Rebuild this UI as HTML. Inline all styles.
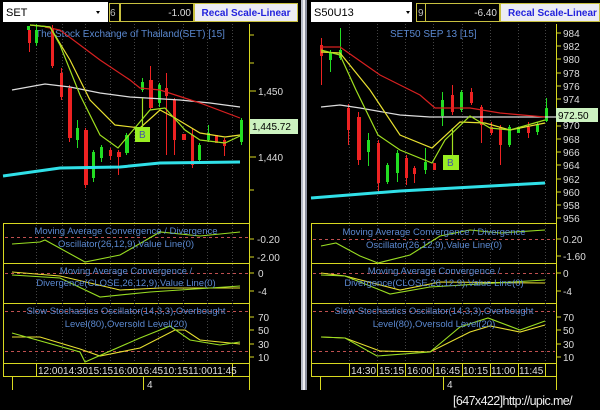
<!DOCTYPE html>
<html><head><meta charset="utf-8"><style>
html,body{margin:0;padding:0;background:#000;width:600px;height:410px;overflow:hidden}
svg{display:block}
text{font-family:"Liberation Sans",Arial,sans-serif}
</style></head><body>
<svg width="600" height="410" viewBox="0 0 600 410" xmlns="http://www.w3.org/2000/svg">
<rect width="600" height="410" fill="#000"/>
<rect x="301" y="0" width="2" height="390" fill="#b8bcc8"/>
<rect x="303" y="0" width="2" height="390" fill="#f0f0f4"/>
<rect x="305" y="0" width="2" height="390" fill="#8c90a0"/>

<rect x="3" y="2" width="105" height="20" fill="#fff"/>
<text x="6" y="16" font-size="11" fill="#000">SET</text>
<path d="M96 11 l4 0 l-2 3z" fill="#000"/>
<rect x="109.5" y="3.5" width="10" height="18" fill="#000" stroke="#c8c040"/>
<text x="110" y="16" font-size="10" fill="#bbb">6</text>
<rect x="120.5" y="3.5" width="73" height="18" fill="#000" stroke="#c8c040"/>
<text x="191" y="16" font-size="10" fill="#ddd" text-anchor="end">-1.00</text>
<rect x="194.5" y="3.5" width="103" height="18" fill="#ececf4" stroke="#c8c040"/>
<text x="246" y="16" font-size="10" font-weight="bold" fill="#2222dd" text-anchor="middle">Recal Scale-Linear</text>

<rect x="311" y="2" width="101" height="20" fill="#fff"/>
<text x="314" y="16" font-size="11" fill="#000">S50U13</text>
<path d="M406 11 l4 0 l-2 3z" fill="#000"/>
<rect x="416.5" y="3.5" width="9" height="18" fill="#000" stroke="#c8c040"/>
<text x="418" y="16" font-size="10" fill="#bbb">9</text>
<rect x="425.5" y="3.5" width="74" height="18" fill="#000" stroke="#c8c040"/>
<text x="497" y="16" font-size="10" fill="#ddd" text-anchor="end">-6.40</text>
<rect x="500.5" y="3.5" width="99" height="18" fill="#ececf4" stroke="#c8c040"/>
<text x="508" y="16" font-size="10" font-weight="bold" fill="#2222dd">Recal Scale-Linear</text>

<g stroke="#d8d820" stroke-width="1" fill="none">
<line x1="249.5" y1="24" x2="249.5" y2="390"/>
<line x1="3.5" y1="223" x2="3.5" y2="376"/>
<line x1="3" y1="223.5" x2="250" y2="223.5"/>
<line x1="3" y1="263.5" x2="250" y2="263.5"/>
<line x1="3" y1="303.5" x2="250" y2="303.5"/>
<line x1="3" y1="363.5" x2="250" y2="363.5"/>
<line x1="3" y1="376.5" x2="250" y2="376.5"/>
<line x1="12.5" y1="376" x2="12.5" y2="390"/>
<line x1="143.5" y1="376" x2="143.5" y2="390"/>
<line x1="36.5" y1="364" x2="36.5" y2="376"/>
<line x1="232.5" y1="364" x2="232.5" y2="376"/>
</g>
<g stroke="#444" stroke-dasharray="1,2">
<line x1="36.5" y1="24" x2="36.5" y2="363"/><line x1="62.5" y1="24" x2="62.5" y2="363"/><line x1="85.5" y1="24" x2="85.5" y2="363"/><line x1="110.5" y1="24" x2="110.5" y2="363"/><line x1="134.5" y1="24" x2="134.5" y2="363"/><line x1="158.5" y1="24" x2="158.5" y2="363"/><line x1="183.5" y1="24" x2="183.5" y2="363"/><line x1="207.5" y1="24" x2="207.5" y2="363"/><line x1="232.5" y1="24" x2="232.5" y2="363"/>
</g>
<g stroke="#d8d820">
<line x1="250" y1="35" x2="254" y2="35"/><line x1="250" y1="63" x2="254" y2="63"/><line x1="250" y1="91" x2="256" y2="91"/><line x1="250" y1="124" x2="254" y2="124"/><line x1="250" y1="157" x2="256" y2="157"/><line x1="250" y1="190" x2="254" y2="190"/>
<line x1="250" y1="239" x2="254" y2="239"/><line x1="250" y1="257" x2="254" y2="257"/><line x1="250" y1="273" x2="254" y2="273"/><line x1="250" y1="291" x2="254" y2="291"/><line x1="250" y1="317" x2="254" y2="317"/><line x1="250" y1="330" x2="254" y2="330"/><line x1="250" y1="344" x2="254" y2="344"/><line x1="250" y1="357" x2="254" y2="357"/>
</g>
<g font-size="10" fill="#ddd">
<text x="258" y="95">1,450</text><text x="258" y="161">1,440</text>
<text x="257" y="243">-0.20</text><text x="257" y="261">-2.00</text>
<text x="258" y="277">0</text><text x="258" y="295">-4</text>
<text x="258" y="321">70</text><text x="258" y="334">50</text><text x="258" y="348">30</text><text x="258" y="361">10</text>
<text x="38" y="374" font-size="10">12:0014:3015:1516:0016:4510:1511:0011:45</text>
<text x="147" y="388">4</text>
</g>
<rect x="250" y="119" width="48" height="15" fill="#ccf2c0"/>
<text x="252" y="130" font-size="10" fill="#000">1,445.72</text>
<text x="35" y="37" font-size="10" fill="#5a88d0">The Stock Exchange of Thailand(SET) [15]</text>

<g>
<rect x="27" y="26" width="3" height="4" fill="#22dd22"/>
<line x1="29.5" y1="30" x2="29.5" y2="52" stroke="#e22"/><rect x="28" y="30" width="3" height="13" fill="#e22"/>
<line x1="36.5" y1="24" x2="36.5" y2="46" stroke="#2d2"/><rect x="35" y="30" width="3" height="13" fill="#2d2"/>
<line x1="52.5" y1="25" x2="52.5" y2="68" stroke="#e22"/><rect x="51" y="28" width="3" height="38" fill="#e22"/>
<line x1="61.5" y1="68" x2="61.5" y2="100" stroke="#e22"/><rect x="60" y="73" width="3" height="24" fill="#e22"/>
<line x1="69.5" y1="85" x2="69.5" y2="142" stroke="#e22"/><rect x="68" y="88" width="4" height="50" fill="#e22"/>
<line x1="77.5" y1="120" x2="77.5" y2="148" stroke="#2d2"/><rect x="76" y="128" width="3" height="12" fill="#2d2"/>
<line x1="85.5" y1="128" x2="85.5" y2="188" stroke="#e22"/><rect x="84" y="130" width="4" height="55" fill="#e22"/>
<line x1="93.5" y1="150" x2="93.5" y2="182" stroke="#2d2"/><rect x="92" y="152" width="3" height="26" fill="#2d2"/>
<line x1="101.5" y1="145" x2="101.5" y2="162" stroke="#2d2"/><rect x="100" y="147" width="3" height="11" fill="#2d2"/>
<line x1="110.5" y1="148" x2="110.5" y2="160" stroke="#e22"/><rect x="109" y="150" width="3" height="6" fill="#e22"/>
<line x1="118.5" y1="150" x2="118.5" y2="175" stroke="#e22"/><rect x="117" y="152" width="4" height="5" fill="#e22"/>
<line x1="126.5" y1="133" x2="126.5" y2="155" stroke="#2d2"/><rect x="125" y="135" width="4" height="18" fill="#2d2"/>
<line x1="142.5" y1="78" x2="142.5" y2="92" stroke="#2d2"/><rect x="141" y="82" width="3" height="8" fill="#2d2"/>
<line x1="150.5" y1="66" x2="150.5" y2="110" stroke="#e22"/><rect x="149" y="80" width="4" height="28" fill="#e22"/>
<line x1="159.5" y1="83" x2="159.5" y2="107" stroke="#2d2"/><rect x="158" y="85" width="3" height="18" fill="#2d2"/>
<line x1="166.5" y1="73" x2="166.5" y2="155" stroke="#e22"/><rect x="165" y="88" width="3" height="8" fill="#e22"/>
<line x1="174.5" y1="98" x2="174.5" y2="155" stroke="#e22"/><rect x="173" y="100" width="3" height="40" fill="#e22"/>
<rect x="182" y="134" width="4" height="6" fill="#e22"/>
<line x1="192.5" y1="128" x2="192.5" y2="168" stroke="#e22"/><rect x="191" y="135" width="3" height="30" fill="#e22"/>
<line x1="199.5" y1="143" x2="199.5" y2="162" stroke="#2d2"/><rect x="198" y="145" width="3" height="15" fill="#2d2"/>
<line x1="208.5" y1="125" x2="208.5" y2="142" stroke="#2d2"/><rect x="207" y="133" width="3" height="7" fill="#2d2"/>
<rect x="215" y="135" width="3" height="8" fill="#e22"/>
<line x1="224.5" y1="138" x2="224.5" y2="156" stroke="#e22"/><rect x="223" y="140" width="3" height="6" fill="#e22"/>
<line x1="241.5" y1="118" x2="241.5" y2="145" stroke="#2d2"/><rect x="240" y="120" width="3" height="22" fill="#2d2"/>
</g>
<g fill="none" stroke-width="1.2">
<polyline stroke="#ddd" points="12,90 45,84 70,87 100,93 130,97 180,100 210,103 240,107"/>
<polyline stroke="#d82020" points="45,27 60,30 80,45 100,60 130,80 140,88 160,90 200,103 240,118"/>
<polyline stroke="#e8e030" points="30,25 50,27 70,60 90,100 115,125 140,128 160,110 175,118 200,133 225,137 240,135"/>
<polyline stroke="#a0e020" points="30,25 50,27 60,45 80,95 100,135 118,148 150,110 165,108 185,130 200,140 225,143 240,136"/>
<polyline stroke="#30e0e8" stroke-width="3" points="3,176 60,168 120,167 160,163 240,162"/>
<line x1="142.5" y1="98" x2="142.5" y2="128" stroke="#a0e020"/>
</g>
<rect x="135" y="127" width="15" height="15" fill="#99ee22"/>
<text x="139" y="138" font-size="10" fill="#4455aa">B</text>

<g stroke="#c05050" stroke-dasharray="3,3"><line x1="5" y1="237.5" x2="248" y2="237.5"/><line x1="5" y1="273.5" x2="248" y2="273.5"/><line x1="5" y1="311.5" x2="248" y2="311.5"/><line x1="5" y1="351.5" x2="248" y2="351.5"/></g>
<g fill="none" stroke-width="1.1">
<polyline stroke="#99dd22" points="12,244 40,242 45,240 85,262 120,255 160,232 200,236 240,232"/>
<polyline stroke="#e8e030" points="12,272 60,276 120,290 160,288 240,288"/>
<polyline stroke="#99dd22" points="12,275 60,278 100,297 150,292 240,286"/>
<polyline stroke="#e8e030" points="12,337 40,337 80,349 100,356 140,348 175,330 185,330 200,340 240,344"/>
<polyline stroke="#99dd22" points="12,333 80,352 85,362 140,338 170,326 190,340 220,345 240,342"/>
</g>
<g font-size="9.5" fill="#5a88d0" text-anchor="middle">
<text x="126" y="234">Moving Average Convergence / Divergence</text>
<text x="126" y="247">Oscillator(26,12,9),Value Line(0)</text>
<text x="126" y="274">Moving Average Convergence /</text>
<text x="126" y="286">Divergence(CLOSE,26,12,9),Value Line(0)</text>
<text x="126" y="314">Slow Stochastics Oscillator(14,3,3),Overbought</text>
<text x="126" y="327">Level(80),Oversold Level(20)</text>
</g>

<g stroke="#d8d820" stroke-width="1" fill="none">
<line x1="556.5" y1="24" x2="556.5" y2="390"/>
<line x1="311.5" y1="223" x2="311.5" y2="376"/>
<line x1="311" y1="223.5" x2="557" y2="223.5"/>
<line x1="311" y1="263.5" x2="557" y2="263.5"/>
<line x1="311" y1="303.5" x2="557" y2="303.5"/>
<line x1="311" y1="363.5" x2="557" y2="363.5"/>
<line x1="311" y1="376.5" x2="557" y2="376.5"/>
<line x1="320.5" y1="376" x2="320.5" y2="390"/>
<line x1="443.5" y1="376" x2="443.5" y2="390"/>
<line x1="349.5" y1="364" x2="349.5" y2="376"/><line x1="377.5" y1="364" x2="377.5" y2="376"/><line x1="405.5" y1="364" x2="405.5" y2="376"/><line x1="433.5" y1="364" x2="433.5" y2="376"/><line x1="462.5" y1="364" x2="462.5" y2="376"/><line x1="490.5" y1="364" x2="490.5" y2="376"/><line x1="518.5" y1="364" x2="518.5" y2="376"/><line x1="545.5" y1="364" x2="545.5" y2="376"/>
</g>
<g stroke="#444" stroke-dasharray="1,2">
<line x1="349.5" y1="24" x2="349.5" y2="363"/><line x1="377.5" y1="24" x2="377.5" y2="363"/><line x1="405.5" y1="24" x2="405.5" y2="363"/><line x1="433.5" y1="24" x2="433.5" y2="363"/><line x1="462.5" y1="24" x2="462.5" y2="363"/><line x1="490.5" y1="24" x2="490.5" y2="363"/><line x1="518.5" y1="24" x2="518.5" y2="363"/><line x1="545.5" y1="24" x2="545.5" y2="363"/>
</g>
<g stroke="#d8d820">
<line x1="557" y1="33" x2="561" y2="33"/><line x1="557" y1="46" x2="561" y2="46"/><line x1="557" y1="59" x2="561" y2="59"/><line x1="557" y1="73" x2="561" y2="73"/><line x1="557" y1="86" x2="561" y2="86"/><line x1="557" y1="99" x2="561" y2="99"/><line x1="557" y1="112" x2="561" y2="112"/><line x1="557" y1="126" x2="561" y2="126"/><line x1="557" y1="139" x2="561" y2="139"/><line x1="557" y1="152" x2="561" y2="152"/><line x1="557" y1="165" x2="561" y2="165"/><line x1="557" y1="179" x2="561" y2="179"/><line x1="557" y1="192" x2="561" y2="192"/><line x1="557" y1="205" x2="561" y2="205"/><line x1="557" y1="218" x2="561" y2="218"/>
<line x1="557" y1="239" x2="561" y2="239"/><line x1="557" y1="256" x2="561" y2="256"/><line x1="557" y1="273" x2="561" y2="273"/><line x1="557" y1="291" x2="561" y2="291"/><line x1="557" y1="317" x2="561" y2="317"/><line x1="557" y1="330" x2="561" y2="330"/><line x1="557" y1="344" x2="561" y2="344"/><line x1="557" y1="357" x2="561" y2="357"/>
</g>
<g font-size="10" fill="#ddd">
<text x="563" y="37">984</text><text x="563" y="50">982</text><text x="563" y="63">980</text><text x="563" y="77">978</text><text x="563" y="90">976</text><text x="563" y="103">974</text><text x="563" y="129">970</text><text x="563" y="143">968</text><text x="563" y="156">966</text><text x="563" y="169">964</text><text x="563" y="183">962</text><text x="563" y="196">960</text><text x="563" y="209">958</text><text x="563" y="222">956</text>
<text x="563" y="243">0.20</text><text x="563" y="260">-1.60</text>
<text x="563" y="277">0</text><text x="563" y="295">-4</text>
<text x="563" y="321">70</text><text x="563" y="334">50</text><text x="563" y="348">30</text><text x="563" y="361">10</text>
<text x="351" y="374">14:30</text><text x="379" y="374">15:15</text><text x="407" y="374">16:00</text><text x="435" y="374">16:45</text><text x="463" y="374">10:15</text><text x="491" y="374">11:00</text><text x="519" y="374">11:45</text>
<text x="447" y="388">4</text>
</g>
<rect x="556" y="108" width="42" height="14" fill="#ccf2c0"/>
<text x="558" y="119" font-size="10" fill="#000">972.50</text>
<text x="390" y="37" font-size="10" fill="#5a88d0">SET50 SEP 13   [15]</text>

<g>
<line x1="321.5" y1="38" x2="321.5" y2="85" stroke="#e22"/><rect x="320" y="45" width="3" height="11" fill="#e22"/>
<line x1="330.5" y1="50" x2="330.5" y2="72" stroke="#2d2"/><rect x="329" y="52" width="3" height="8" fill="#2d2"/>
<line x1="340.5" y1="28" x2="340.5" y2="60" stroke="#2d2"/><rect x="339" y="50" width="3" height="8" fill="#2d2"/>
<line x1="348.5" y1="104" x2="348.5" y2="145" stroke="#e22"/><rect x="347" y="108" width="3" height="22" fill="#e22"/>
<line x1="358.5" y1="112" x2="358.5" y2="165" stroke="#e22"/><rect x="357" y="117" width="4" height="43" fill="#e22"/>
<line x1="368.5" y1="133" x2="368.5" y2="166" stroke="#2d2"/><rect x="367" y="140" width="3" height="12" fill="#2d2"/>
<line x1="378.5" y1="140" x2="378.5" y2="192" stroke="#e22"/><rect x="377" y="143" width="3" height="40" fill="#e22"/>
<line x1="387.5" y1="163" x2="387.5" y2="184" stroke="#2d2"/><rect x="386" y="165" width="3" height="17" fill="#2d2"/>
<line x1="397.5" y1="150" x2="397.5" y2="182" stroke="#2d2"/><rect x="396" y="153" width="3" height="20" fill="#2d2"/>
<line x1="406.5" y1="155" x2="406.5" y2="185" stroke="#e22"/><rect x="405" y="158" width="3" height="20" fill="#e22"/>
<line x1="414.5" y1="166" x2="414.5" y2="183" stroke="#e22"/><rect x="413" y="168" width="3" height="6" fill="#e22"/>
<line x1="425.5" y1="148" x2="425.5" y2="174" stroke="#2d2"/><rect x="424" y="162" width="3" height="8" fill="#2d2"/>
<rect x="433" y="163" width="3" height="7" fill="#e22"/>
<line x1="442.5" y1="92" x2="442.5" y2="126" stroke="#2d2"/><rect x="441" y="100" width="3" height="16" fill="#2d2"/>
<line x1="452.5" y1="85" x2="452.5" y2="115" stroke="#e22"/><rect x="451" y="95" width="3" height="17" fill="#e22"/>
<line x1="461.5" y1="90" x2="461.5" y2="112" stroke="#2d2"/><rect x="460" y="92" width="3" height="18" fill="#2d2"/>
<line x1="471.5" y1="88" x2="471.5" y2="105" stroke="#e22"/><rect x="470" y="92" width="3" height="11" fill="#e22"/>
<line x1="481.5" y1="105" x2="481.5" y2="143" stroke="#e22"/><rect x="480" y="107" width="3" height="18" fill="#e22"/>
<line x1="491.5" y1="122" x2="491.5" y2="135" stroke="#e22"/><rect x="490" y="127" width="3" height="6" fill="#e22"/>
<line x1="500.5" y1="125" x2="500.5" y2="165" stroke="#e22"/><rect x="499" y="127" width="3" height="18" fill="#e22"/>
<line x1="509.5" y1="125" x2="509.5" y2="147" stroke="#2d2"/><rect x="508" y="127" width="3" height="18" fill="#2d2"/>
<rect x="517" y="127" width="3" height="6" fill="#2d2"/>
<line x1="528.5" y1="122" x2="528.5" y2="138" stroke="#e22"/><rect x="527" y="127" width="3" height="6" fill="#e22"/>
<line x1="537.5" y1="122" x2="537.5" y2="135" stroke="#2d2"/><rect x="536" y="125" width="3" height="7" fill="#2d2"/>
<line x1="546.5" y1="98" x2="546.5" y2="122" stroke="#2d2"/><rect x="545" y="108" width="3" height="13" fill="#2d2"/>
</g>
<g fill="none" stroke-width="1.2">
<polyline stroke="#ddd" points="321,107 340,105 360,108 400,115 430,117 556,117"/>
<polyline stroke="#d82020" points="321,47 340,47 380,75 420,95 435,108 470,108 500,113 545,117"/>
<polyline stroke="#e8e030" points="321,52 340,53 370,90 400,135 432,148 460,122 485,123 510,130 545,123"/>
<polyline stroke="#a0e020" points="321,50 340,55 356,90 378,135 400,150 432,163 445,140 470,116 490,128 510,130 545,120"/>
<polyline stroke="#30e0e8" stroke-width="3" points="311,198 400,191 545,183"/>
<line x1="452.5" y1="128" x2="452.5" y2="155" stroke="#a0e020"/>
</g>
<rect x="443" y="155" width="16" height="15" fill="#99ee22"/>
<text x="447" y="166" font-size="10" fill="#4455aa">B</text>

<g stroke="#c05050" stroke-dasharray="3,3"><line x1="313" y1="239.5" x2="555" y2="239.5"/><line x1="313" y1="273.5" x2="555" y2="273.5"/><line x1="313" y1="311.5" x2="555" y2="311.5"/><line x1="313" y1="351.5" x2="555" y2="351.5"/></g>
<g fill="none" stroke-width="1.1">
<polyline stroke="#99dd22" points="321,246 336,243 360,256 378,263 410,255 440,236 470,230 500,233 545,230"/>
<polyline stroke="#e8e030" points="321,273 345,276 400,290 440,282 545,283"/>
<polyline stroke="#99dd22" points="321,275 345,276 390,294 430,287 545,280"/>
<polyline stroke="#e8e030" points="321,337 345,338 380,351 430,352 470,332 490,326 520,332 545,325"/>
<polyline stroke="#99dd22" points="321,337 345,338 377,356 430,352 460,327 488,318 520,330 545,321"/>
</g>
<g font-size="9.5" fill="#5a88d0" text-anchor="middle">
<text x="434" y="235">Moving Average Convergence / Divergence</text>
<text x="434" y="248">Oscillator(26,12,9),Value Line(0)</text>
<text x="434" y="274">Moving Average Convergence /</text>
<text x="434" y="286">Divergence(CLOSE,26,12,9),Value Line(0)</text>
<text x="434" y="314">Slow Stochastics Oscillator(14,3,3),Overbought</text>
<text x="434" y="327">Level(80),Oversold Level(20)</text>
</g>

<text x="453" y="405" font-size="12.5" fill="#eee" font-family="Liberation Mono,monospace" letter-spacing="-0.6">[647x422]http://upic.me/</text>
</svg>
</body></html>
